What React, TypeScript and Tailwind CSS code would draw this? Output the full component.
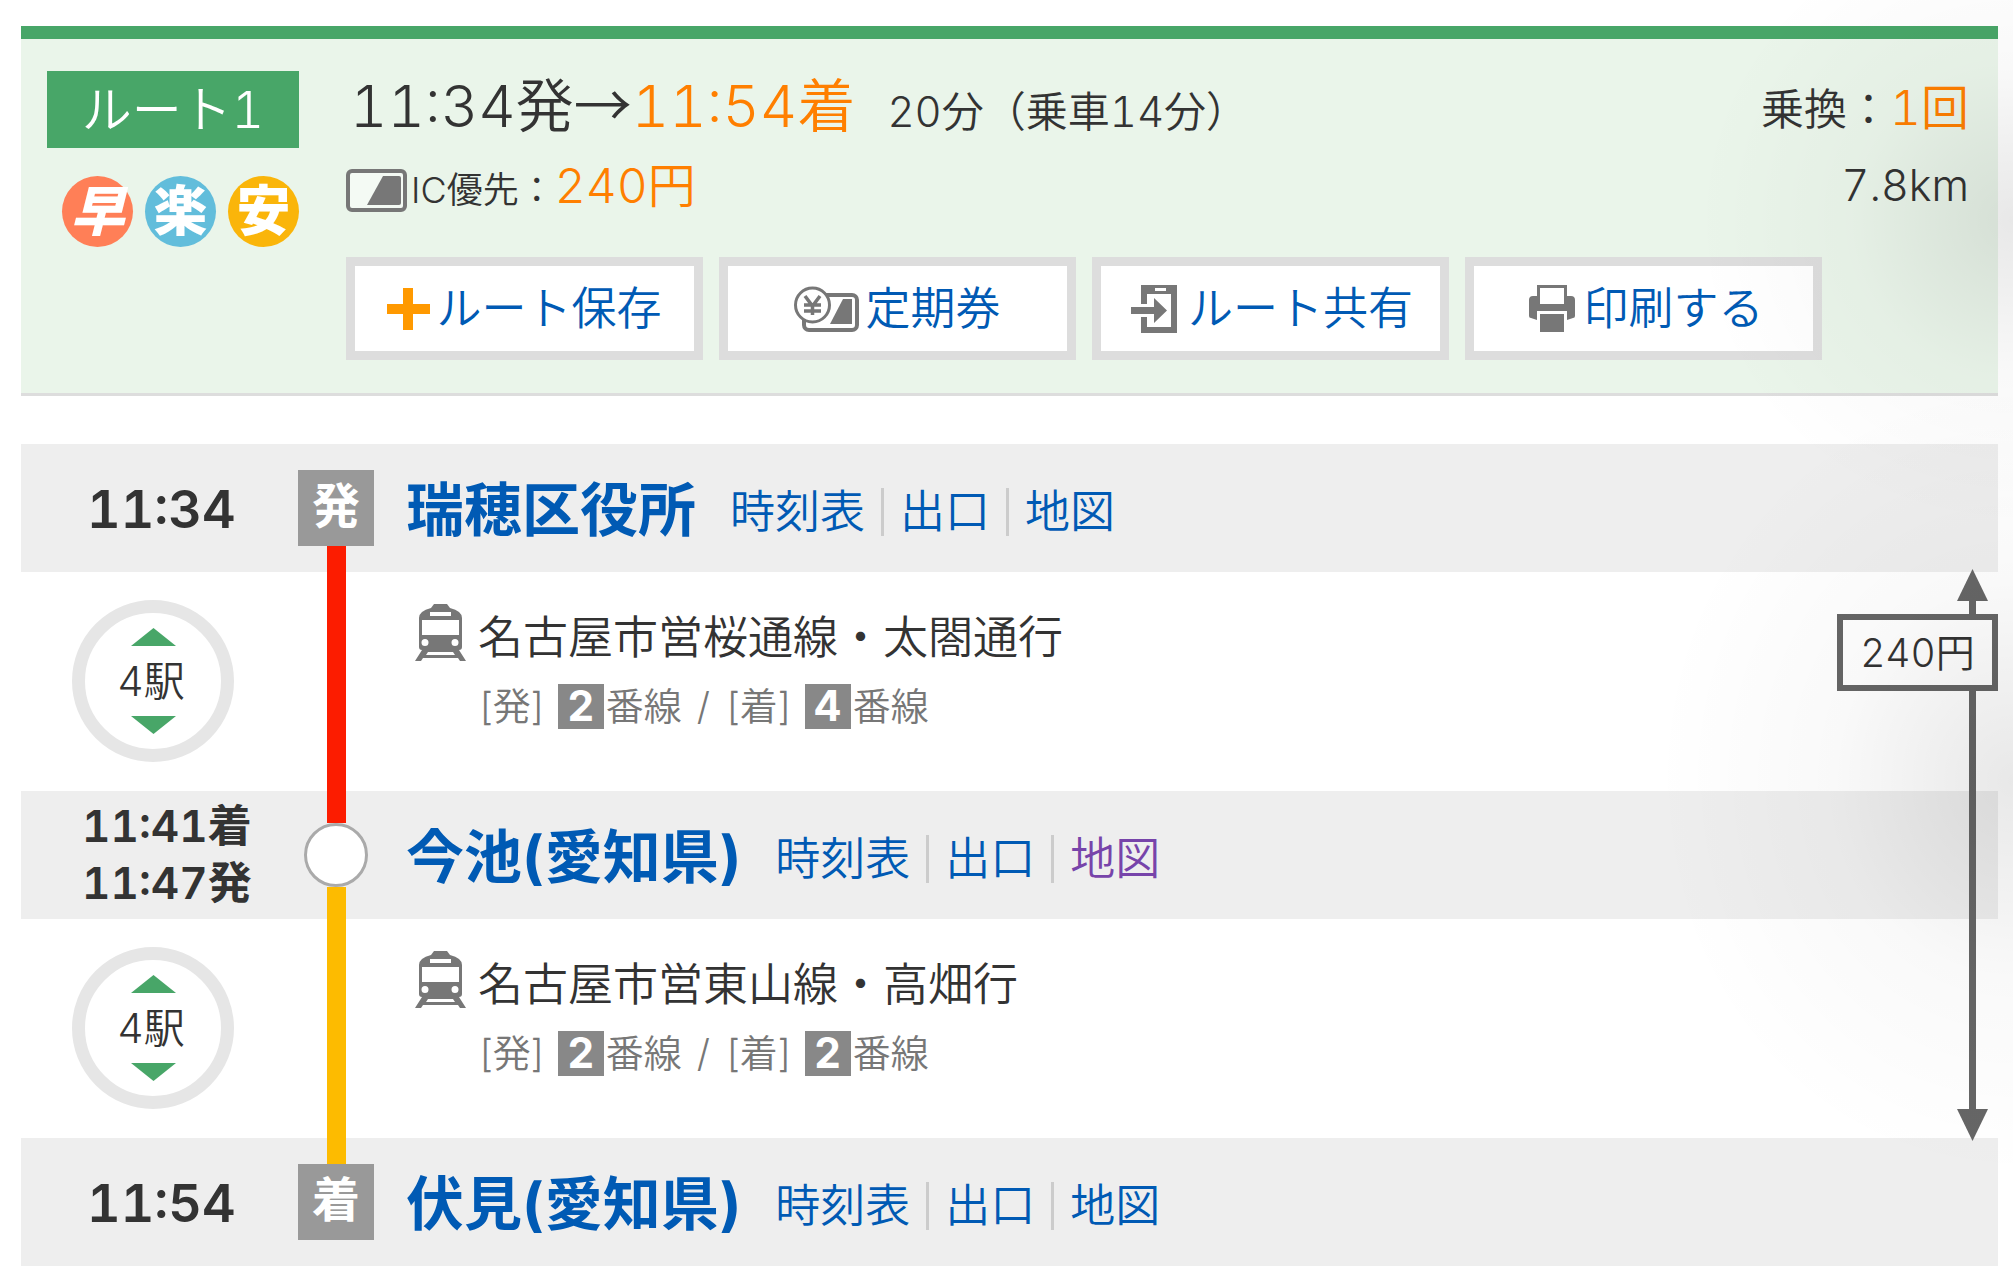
import type { ReactNode } from 'react'

interface StationLink {
  label: string
  visited?: boolean
}

interface StationRowProps {
  times: string[]
  marker: ReactNode
  name: string
  links: StationLink[]
}

interface SectionRowProps {
  stops: number
  lineClass: string
  line: string
  from: number
  to: number
}

const defaultLinks: StationLink[] = [{ label: '時刻表' }, { label: '出口' }, { label: '地図' }]

function CardIcon() {
  return (
    <svg width="61" height="43" viewBox="0 0 61 43" aria-hidden="true">
      <rect x="2" y="2" width="57" height="39" rx="4" fill="#f4faf4" stroke="#777" strokeWidth="4" />
      <path d="M37 7H53Q55 7 55 9V34Q55 36 53 36H21Z" fill="#777" />
    </svg>
  )
}

function PlusIcon() {
  return (
    <svg width="43" height="42" viewBox="0 0 43 42" aria-hidden="true">
      <path d="M16 0H26V16H43V26H26V42H16V26H0V16H16Z" fill="#ff9900" />
    </svg>
  )
}

function PassIcon() {
  return (
    <svg width="65" height="46" viewBox="0 0 65 46" aria-hidden="true">
      <rect x="10" y="9" width="53" height="35" rx="5" fill="#fff" stroke="#777" strokeWidth="4" />
      <path d="M49 13H58V38H36Z" fill="#777" />
      <circle cx="18.500" cy="19" r="17" fill="#fff" stroke="#777" strokeWidth="3" />
      <path d="M11 10L18.500 20L26 10M18.500 19V29M10 19H27M10 25H27" fill="none" stroke="#777" strokeWidth="3.500" />
    </svg>
  )
}

function ShareIcon() {
  return (
    <svg width="54" height="48" viewBox="-3 0 54 48" aria-hidden="true">
      <path
        fillRule="evenodd"
        d="M10 0H46V48H10V32H16V42H40V9H16V19H10ZM24 3V6H35V3Z"
        fill="#777"
      />
      <path d="M0 22H23V13L36 25.500L23 38V29H0Z" fill="#777" />
    </svg>
  )
}

function PrinterIcon() {
  return (
    <svg width="54" height="47" viewBox="-6 0 54 47" aria-hidden="true">
      <path
        fillRule="evenodd"
        d="M8 0H38V11H42Q46 11 46 15V31Q46 33 44 33L38 35V26H8V35L2 33Q0 33 0 31V15Q0 11 4 11H8ZM11 3V19H35V3Z"
        fill="#777"
      />
      <path d="M11 29H35V47H11Z" fill="#777" />
    </svg>
  )
}

function TrainIcon() {
  return (
    <svg width="51" height="57" viewBox="0 0 51 57" aria-hidden="true">
      <path
        fillRule="evenodd"
        d="M19 0H32L35 4Q47 7 47 14V43Q47 46 44 46L51 57H45L43 54H8L6 57H0L7 46Q4 46 4 43V14Q4 7 16 4ZM15 8V12H36V8ZM7 16V31H44V16ZM10 35A3.500 3.500 0 1 0 10 42A3.500 3.500 0 1 0 10 35ZM40 35A3.500 3.500 0 1 0 40 42A3.500 3.500 0 1 0 40 35ZM13 48L11 51H40L38 48Z"
        fill="#777"
      />
    </svg>
  )
}

function ActionButton({ icon, label }: { icon: ReactNode; label: string }) {
  return (
    <button
      type="button"
      className="flex h-[103px] w-[357px] cursor-pointer items-center justify-center gap-1.5 border-9 border-[#ddd] bg-white text-[45px] leading-none text-[#005ab4]"
    >
      {icon}
      <span>{label}</span>
    </button>
  )
}

function Terminal({ label }: { label: string }) {
  return (
    <span className="relative z-10 flex h-[76px] w-[76px] items-center justify-center bg-[#999] pb-1 text-[48px] leading-none font-bold text-white">
      {label}
    </span>
  )
}

function StationRow({ times, marker, name, links }: StationRowProps) {
  return (
    <div className="flex h-32 items-center bg-[#eee]">
      <div
        className={
          times.length > 1
            ? 'w-[277px] pl-[61px] text-[44px] leading-[57px] font-semibold'
            : 'w-[277px] pt-1 pl-[66px] text-[52px] leading-none font-semibold'
        }
      >
        {times.map((time) => (
          <p key={time}>{time}</p>
        ))}
      </div>
      <div className="flex w-[76px] justify-center">{marker}</div>
      <div className="flex items-center pt-1 pl-8 text-[#005ab4]">
        <a href="#" className="text-[58px] leading-none font-bold">
          {name}
        </a>
        <ul className="ml-[18px] flex pt-1 text-[45px] leading-[48px]">
          {links.map((link) => (
            <li key={link.label} className="border-l-3 border-[#ccc] px-4 first:border-l-0">
              <a href="#" className={link.visited ? 'text-[#7744aa]' : ''}>
                {link.label}
              </a>
            </li>
          ))}
        </ul>
      </div>
    </div>
  )
}

function Platform({ value }: { value: number }) {
  return (
    <b className="mr-0.5 ml-3 flex h-[45px] w-[46px] items-center justify-center bg-[#888] text-[42px] leading-none text-white">
      {value}
    </b>
  )
}

function SectionRow({ stops, lineClass, line, from, to }: SectionRowProps) {
  return (
    <div className="flex h-[219px]">
      <div className="w-[277px] pt-7 pl-[51px]">
        <button
          type="button"
          className="flex h-[162px] w-[162px] cursor-pointer flex-col items-center justify-center gap-[15px] rounded-full border-13 border-[#e6e6e6] bg-white text-[41px]"
        >
          <svg width="45" height="18" viewBox="0 0 45 18" aria-hidden="true">
            <path d="M22.500 0L45 18H0Z" fill="#48a668" />
          </svg>
          <span className="pr-1 leading-10">{stops}駅</span>
          <svg width="45" height="18" viewBox="0 0 45 18" aria-hidden="true">
            <path d="M0 0H45L22.500 18Z" fill="#48a668" />
          </svg>
        </button>
      </div>
      {/* 路線の帯は上下の駅の行に重なる */}
      <div className="flex w-[76px] justify-center">
        <div className={`relative -my-8 w-[19px] ${lineClass}`} />
      </div>
      <div className="flex gap-3 pt-8 pl-[41px]">
        <TrainIcon />
        <div>
          <p className="text-[45px] leading-[68px]">{line}</p>
          <p className="flex items-center pt-2 text-[38px] leading-[52px] text-[#777]">
            [発]
            <Platform value={from} />
            番線
            <span className="px-[15px]">/</span>
            [着]
            <Platform value={to} />
            番線
          </p>
        </div>
      </div>
    </div>
  )
}

function FareArrow() {
  return (
    <div className="absolute top-[125px] right-0 bottom-[125px] flex w-[161px] flex-col items-end">
      <svg width="31" height="32" viewBox="0 0 31 32" className="mr-[10px] shrink-0" aria-hidden="true">
        <path d="M15.500 0L31 32H0Z" fill="#666" />
      </svg>
      <div className="mr-[22px] h-[13px] w-[7px] shrink-0 bg-[#666]" />
      <p className="flex h-[77px] w-full shrink-0 items-center justify-center border-6 border-[#666] bg-white text-[39px] leading-none">
        240円
      </p>
      <div className="mr-[22px] w-[7px] grow bg-[#666]" />
      <svg width="31" height="32" viewBox="0 0 31 32" className="mr-[10px] shrink-0" aria-hidden="true">
        <path d="M0 0H31L15.500 32Z" fill="#666" />
      </svg>
    </div>
  )
}

export default function App() {
  return (
    <main className="relative min-h-screen bg-white pt-[26px] pr-[15px] pb-5 pl-[21px] font-['Inter','Noto_Sans_CJK_JP',sans-serif] font-[350] text-[#333] tabular-nums">
      <section className="flex border-t-13 border-b-3 border-t-[#48a668] border-b-[#ddd] bg-[#eaf5ea] pt-8 pr-[29px] pb-[33px] pl-[26px]">
        <div className="w-[299px]">
          <h2 className="flex h-[77px] w-[252px] items-center justify-center bg-[#48a668] text-[50px] leading-none text-white">
            ルート1
          </h2>
          <div className="flex w-[252px] justify-end gap-3 pt-7 text-[54px] leading-none font-black text-white">
            <span className="flex h-[71px] w-[71px] items-center justify-center rounded-full bg-[#ff7f57] italic">早</span>
            <span className="flex h-[71px] w-[71px] items-center justify-center rounded-full bg-[#62bddb]">楽</span>
            <span className="flex h-[71px] w-[71px] items-center justify-center rounded-full bg-[#fab50a]">安</span>
          </div>
        </div>
        <div className="grow">
          <div className="flex justify-between">
            <div>
              <p className="flex h-[76px] items-baseline pl-1 text-[58px] leading-[70px]">
                11:34発<span className="font-['Noto_Sans_CJK_JP',sans-serif] leading-none">→</span>
                <span className="text-[#ff7f00]">11:54着</span>
                <span className="pl-8 text-[42px] leading-none">20分（乗車14分）</span>
              </p>
              <div className="flex h-[86px] items-center gap-1">
                <CardIcon />
                <p className="text-[36px] leading-[60px]">
                  IC優先：<span className="text-[48px] leading-none text-[#ff7f00]">240円</span>
                </p>
              </div>
            </div>
            <div className="text-right text-[43px] leading-[76px]">
              <p>
                乗換：<span className="text-[48px] leading-none text-[#ff7f00]">1回</span>
              </p>
              <p>7.8km</p>
            </div>
          </div>
          <div className="flex gap-4 pt-6">
            <ActionButton icon={<PlusIcon />} label="ルート保存" />
            <ActionButton icon={<PassIcon />} label="定期券" />
            <ActionButton icon={<ShareIcon />} label="ルート共有" />
            <ActionButton icon={<PrinterIcon />} label="印刷する" />
          </div>
        </div>
      </section>

      <section className="relative mt-12">
        <StationRow times={['11:34']} marker={<Terminal label="発" />} name="瑞穂区役所" links={defaultLinks} />
        <SectionRow stops={4} lineClass="bg-[#fc1c00]" line="名古屋市営桜通線・太閤通行" from={2} to={4} />
        <StationRow
          times={['11:41着', '11:47発']}
          marker={<span className="relative z-10 h-16 w-16 rounded-full border-3 border-[#aaa] bg-white" />}
          name="今池(愛知県)"
          links={[{ label: '時刻表' }, { label: '出口' }, { label: '地図', visited: true }]}
        />
        <SectionRow stops={4} lineClass="bg-[#fdbb00]" line="名古屋市営東山線・高畑行" from={2} to={2} />
        <StationRow times={['11:54']} marker={<Terminal label="着" />} name="伏見(愛知県)" links={defaultLinks} />
        <FareArrow />
      </section>

      {/* 右端の影 */}
      <div className="pointer-events-none absolute inset-y-0 right-0 z-20 w-[400px] bg-[radial-gradient(320px_310px_at_100%_220px,rgba(0,0,0,0.09),rgba(0,0,0,0.025)_50%,transparent),radial-gradient(360px_400px_at_100%_780px,rgba(0,0,0,0.09),rgba(0,0,0,0.025)_50%,transparent)]" />
    </main>
  )
}
